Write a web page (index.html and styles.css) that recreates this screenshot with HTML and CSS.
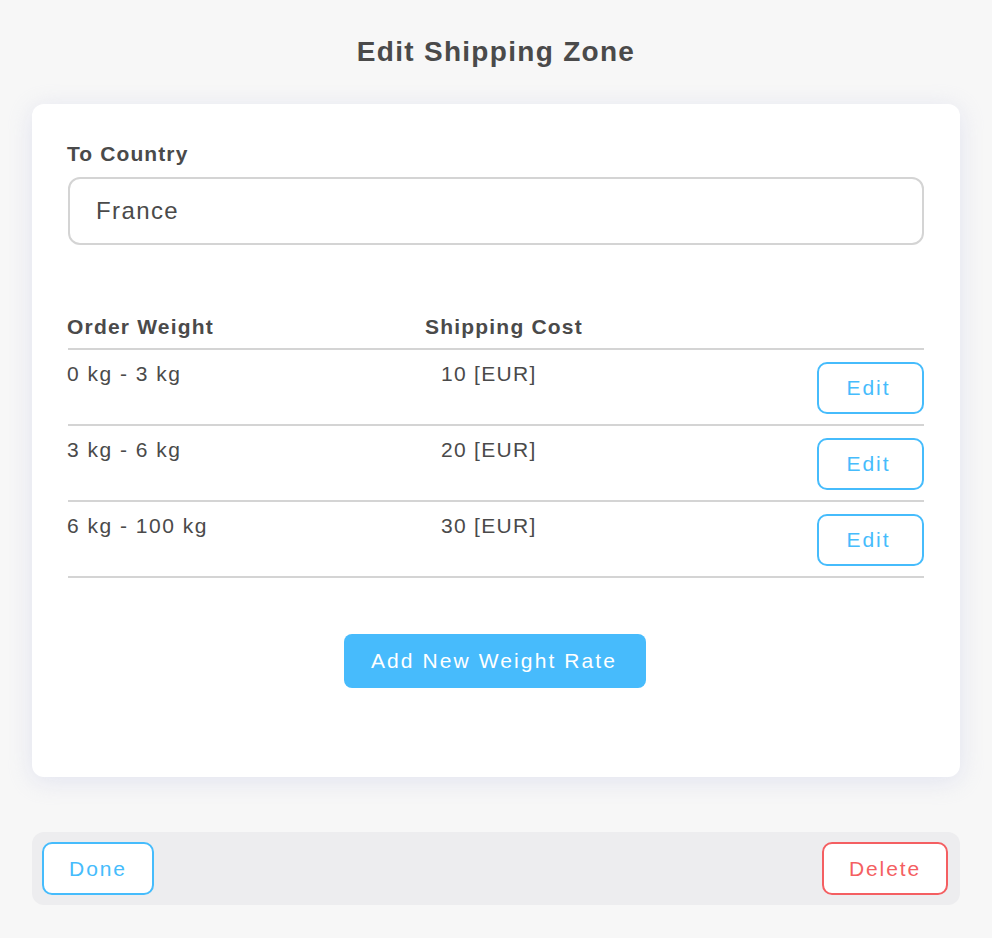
FILE: index.html
```html
<!DOCTYPE html>
<html>
<head>
<meta charset="utf-8">
<link rel="stylesheet" href="styles.css">
</head>
<body>
<div class="page">
  <h1 class="title">Edit Shipping Zone</h1>
  <div class="card">
    <label class="label">To Country</label>
    <div class="input">France</div>
    <div class="table">
      <div class="thead">
        <div class="col-a">Order Weight</div>
        <div class="col-b">Shipping Cost</div>
      </div>
      <div class="row">
        <div class="col-a">0 kg - 3 kg</div>
        <div class="col-b val">10 [EUR]</div>
        <button class="btn btn-blue">Edit</button>
      </div>
      <div class="row">
        <div class="col-a">3 kg - 6 kg</div>
        <div class="col-b val">20 [EUR]</div>
        <button class="btn btn-blue">Edit</button>
      </div>
      <div class="row">
        <div class="col-a">6 kg - 100 kg</div>
        <div class="col-b val">30 [EUR]</div>
        <button class="btn btn-blue">Edit</button>
      </div>
    </div>
    <div class="add-wrap">
      <button class="add">Add New Weight Rate</button>
    </div>
  </div>
  <div class="footer">
    <button class="btn btn-blue done">Done</button>
    <button class="btn btn-red delete">Delete</button>
  </div>
</div>
</body>
</html>
```
FILE: styles.css
```css
html, body {
  margin: 0;
  padding: 0;
  background: #f7f7f7;
}
body {
  font-family: "Liberation Sans", Arial, sans-serif;
  color: #4a4a4a;
  width: 992px;
  height: 938px;
  overflow: hidden;
}
.page {
  padding: 0 32px;
}
.title {
  margin: 0;
  padding-top: 36px;
  height: 104px;
  box-sizing: border-box;
  text-align: center;
  font-size: 28px;
  font-weight: bold;
  letter-spacing: 1.3px;
  line-height: 32px;
}
.card {
  background: #fff;
  border-radius: 12px;
  box-shadow: 0 4px 24px rgba(200, 205, 230, 0.45);
  padding: 38px 36px 0 36px;
  height: 673px;
  box-sizing: border-box;
}
.label {
  display: block;
  font-size: 21px;
  font-weight: bold;
  letter-spacing: 1.1px;
  line-height: 24px;
  margin-left: -1px;
  margin-bottom: 11px;
}
.input {
  height: 68px;
  box-sizing: border-box;
  border: 2px solid #d4d4d4;
  border-radius: 12px;
  padding-left: 26px;
  display: flex;
  align-items: center;
  font-size: 24px;
  letter-spacing: 1.4px;
}
.table {
  margin-top: 70px;
}
.thead {
  display: flex;
  font-weight: bold;
  font-size: 21px;
  letter-spacing: 1.2px;
  line-height: 24px;
  padding-bottom: 9px;
  border-bottom: 2px solid #d4d4d4;
}
.col-a {
  width: 358px;
  margin-left: -1px;
}
.row {
  display: flex;
  align-items: flex-start;
  height: 76px;
  box-sizing: border-box;
  border-bottom: 2px solid #d4d4d4;
  font-size: 21px;
  letter-spacing: 1.5px;
  line-height: 24px;
  padding-top: 12px;
}
.val {
  padding-left: 16px;
  letter-spacing: 1.3px;
}
.row .btn {
  margin-left: auto;
}
.btn {
  font-family: inherit;
  background: #fff;
  border: 2px solid #46bcfc;
  color: #46bcfc;
  border-radius: 10px;
  font-size: 21px;
  letter-spacing: 1.9px;
  height: 53px;
  width: 106px;
  cursor: pointer;
  padding: 0;
}
.row .btn {
  height: 52px;
  width: 107px;
  padding-right: 4px;
}
.btn-red {
  border-color: #f45f62;
  color: #f45f62;
}
.add-wrap {
  display: flex;
  justify-content: center;
  margin-top: 56px;
}
.add {
  font-family: inherit;
  background: #47bbfc;
  color: #fff;
  border: none;
  border-radius: 8px;
  width: 302px;
  height: 54px;
  font-size: 21px;
  letter-spacing: 2.1px;
  padding: 0 2px 0 0;
  margin-left: -2px;
}
.footer {
  margin-top: 55px;
  background: #ededef;
  border-radius: 12px;
  height: 73px;
  box-sizing: border-box;
  padding: 10px 12px 0 10px;
  display: flex;
  justify-content: space-between;
  align-items: flex-start;
}
.done {
  width: 112px;
}
.delete {
  width: 126px;
}
```
